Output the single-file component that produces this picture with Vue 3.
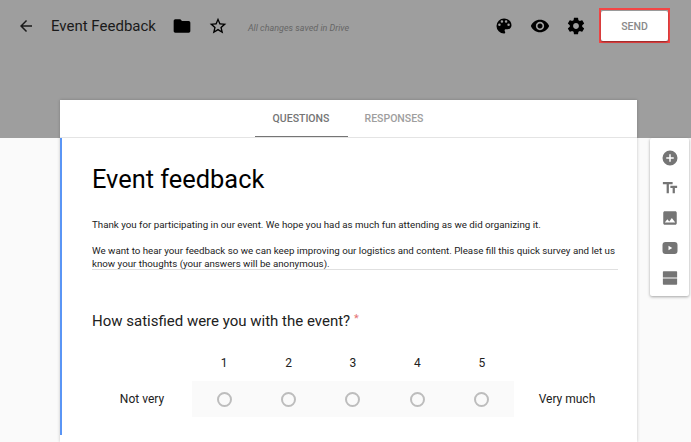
<template>
  <div class="page">
    <header class="topbar">
      <svg class="icon back" viewBox="0 0 24 24"><path d="M20 11H7.83l5.59-5.59L12 4l-8 8 8 8 1.41-1.41L7.83 13H20v-2z" /></svg>
      <span class="doc-title">Event Feedback</span>
      <svg class="icon folder" viewBox="0 0 24 24"><path d="M10 4H4c-1.1 0-2 .9-2 2v12c0 1.1.9 2 2 2h16c1.1 0 2-.9 2-2V8c0-1.1-.9-2-2-2h-8l-2-2z" /></svg>
      <svg class="icon star" viewBox="0 0 24 24"><path d="M22 9.24l-7.19-.62L12 2 9.19 8.63 2 9.24l5.46 4.73L5.82 21 12 17.27 18.18 21l-1.63-7.03L22 9.24zM12 15.4l-3.76 2.27 1-4.28-3.32-2.88 4.38-.38L12 6.1l1.71 4.04 4.38.38-3.32 2.88 1 4.28L12 15.4z" /></svg>
      <span class="saved">All changes saved in Drive</span>
      <div class="actions">
        <svg class="icon" viewBox="0 0 24 24"><path d="M12 3a9 9 0 0 0 0 18c.83 0 1.5-.67 1.5-1.5 0-.39-.15-.74-.39-1.01-.23-.26-.38-.61-.38-.99 0-.83.67-1.5 1.5-1.5H16c2.76 0 5-2.24 5-5 0-4.42-4.03-8-9-8zm-5.5 9a1.5 1.5 0 1 1 0-3 1.5 1.5 0 0 1 0 3zm3-4a1.5 1.5 0 1 1 0-3 1.5 1.5 0 0 1 0 3zm5 0a1.5 1.5 0 1 1 0-3 1.5 1.5 0 0 1 0 3zm3 4a1.5 1.5 0 1 1 0-3 1.5 1.5 0 0 1 0 3z" /></svg>
        <svg class="icon" viewBox="0 0 24 24"><path d="M12 4.5C7 4.5 2.73 7.61 1 12c1.73 4.39 6 7.5 11 7.5s9.27-3.11 11-7.5c-1.73-4.39-6-7.5-11-7.5zM12 17c-2.76 0-5-2.24-5-5s2.24-5 5-5 5 2.24 5 5-2.24 5-5 5zm0-8c-1.66 0-3 1.34-3 3s1.34 3 3 3 3-1.34 3-3-1.34-3-3-3z" /></svg>
        <svg class="icon" viewBox="0 0 24 24"><path d="M19.43 12.98c.04-.32.07-.64.07-.98s-.03-.66-.07-.98l2.11-1.65c.19-.15.24-.42.12-.64l-2-3.46c-.12-.22-.39-.3-.61-.22l-2.49 1c-.52-.4-1.08-.73-1.69-.98l-.38-2.65A.488.488 0 0 0 14 2h-4c-.25 0-.46.18-.49.42l-.38 2.65c-.61.25-1.17.59-1.69.98l-2.49-1c-.23-.09-.49 0-.61.22l-2 3.46c-.13.22-.07.49.12.64l2.11 1.65c-.04.32-.07.65-.07.98s.03.66.07.98l-2.11 1.65c-.19.15-.24.42-.12.64l2 3.46c.12.22.39.3.61.22l2.49-1c.52.4 1.08.73 1.69.98l.38 2.65c.03.24.24.42.49.42h4c.25 0 .46-.18.49-.42l.38-2.65c.61-.25 1.17-.59 1.69-.98l2.49 1c.23.09.49 0 .61-.22l2-3.46c.12-.22.07-.49-.12-.64l-2.11-1.65zM12 15.5c-1.93 0-3.5-1.57-3.5-3.5s1.57-3.5 3.5-3.5 3.5 1.57 3.5 3.5-1.57 3.5-3.5 3.5z" /></svg>
      </div>
      <div class="send-frame">
        <button class="send">SEND</button>
      </div>
    </header>

    <main class="content">
      <section class="card">
        <nav class="tabs">
          <span class="tab active">QUESTIONS</span>
          <span class="tab">RESPONSES</span>
        </nav>
        <div class="form">
          <h1>Event feedback</h1>
          <div class="description">
            <p>Thank you for participating in our event. We hope you had as much fun attending as we did organizing it.</p>
            <p>We want to hear your feedback so we can keep improving our logistics and content. Please fill this quick survey and let us know your thoughts (your answers will be anonymous).</p>
          </div>
          <h2>How satisfied were you with the event? <span class="required">*</span></h2>
          <div class="scale">
            <span></span>
            <span v-for="n in scale" :key="n" class="num">{{ n }}</span>
            <span></span>
            <span class="end-label">Not very</span>
            <div class="radios">
              <span v-for="n in scale" :key="n" class="radio-cell"><i class="radio"></i></span>
            </div>
            <span class="end-label">Very much</span>
          </div>
        </div>
      </section>

      <aside class="toolbox">
        <svg class="tool" viewBox="0 0 24 24"><path d="M12 2a10 10 0 1 0 0 20 10 10 0 0 0 0-20zm5 11h-4v4h-2v-4H7v-2h4V7h2v4h4v2z" /></svg>
        <svg class="tool" viewBox="0 0 24 24"><path d="M2.5 4v3h5v12h3V7h5V4h-13zm19 5h-9v3h3v7h3v-7h3V9z" /></svg>
        <svg class="tool" viewBox="0 0 24 24"><path d="M21 19V5c0-1.1-.9-2-2-2H5c-1.1 0-2 .9-2 2v14c0 1.1.9 2 2 2h14c1.1 0 2-.9 2-2zM8.5 13.5l2.5 3.01L14.5 12l4.5 6H5l3.5-4.5z" /></svg>
        <svg class="tool" viewBox="0 0 24 24"><path d="M6 4h12a4 4 0 0 1 4 4v8a4 4 0 0 1-4 4H6a4 4 0 0 1-4-4V8a4 4 0 0 1 4-4zm4 5v6l5-3-5-3z" fill-rule="evenodd" /></svg>
        <svg class="tool" viewBox="0 0 24 24"><path d="M3.5 3h17a1 1 0 0 1 1 1v7.2h-19V4a1 1 0 0 1 1-1zm-1 9.8h19V20a1 1 0 0 1-1 1h-17a1 1 0 0 1-1-1v-7.2z" /></svg>
      </aside>
    </main>
  </div>
</template>

<script setup>
const scale = [1, 2, 3, 4, 5]
</script>

<style>
html,
body {
  margin: 0;
  background: #fafafa;
}
</style>

<style scoped>
.page {
  width: 691px;
  height: 442px;
  overflow: hidden;
  background: #fafafa;
  font-family: Roboto, "Liberation Sans", sans-serif;
  color: #212121;
}

.topbar {
  height: 138px;
  box-sizing: border-box;
  padding: 8px 21px 0 17px;
  background: #9e9e9e;
  display: flex;
  align-items: flex-start;
}

.icon {
  width: 20px;
  height: 20px;
  margin-top: 8px;
  flex: none;
  fill: #000;
}

.back {
  width: 18px;
  height: 18px;
  margin-top: 9px;
  fill: #1a1a1a;
}

.doc-title {
  margin-left: 16px;
  font-size: 15px;
  line-height: 36px;
  color: #1a1a1a;
  white-space: nowrap;
}

.folder {
  margin-left: 16px;
}

.star {
  margin-left: 16px;
}

.saved {
  margin-left: 20px;
  font-size: 9px;
  font-style: italic;
  line-height: 40px;
  color: #666;
  white-space: nowrap;
}

.actions {
  margin-left: auto;
  display: flex;
  gap: 16px;
}

.send-frame {
  margin-left: 13px;
  width: 71px;
  height: 35px;
  box-sizing: border-box;
  border: 2px solid #f44545;
  padding: 1px 0;
  flex: none;
}

.send {
  display: block;
  width: 100%;
  height: 30px;
  border: 0;
  border-radius: 2px;
  padding: 0;
  background: #fff;
  box-shadow: 0 1px 2px rgba(0, 0, 0, 0.45);
  font: 500 10.5px Roboto, sans-serif;
  color: #8a8a8a;
}

.content {
  display: flex;
  align-items: flex-start;
  margin-top: -38px;
  padding-left: 60px;
}

.card {
  width: 577px;
  height: 342px;
  flex: none;
  background: #fff;
  box-shadow: 0 0 3px rgba(0, 0, 0, 0.22);
}

.tabs {
  height: 38px;
  box-sizing: border-box;
  border-bottom: 1px solid #e4e4e4;
  display: flex;
  justify-content: center;
  padding-right: 2px;
}

.tab {
  width: 93px;
  height: 37px;
  box-sizing: border-box;
  text-align: center;
  font-size: 10.5px;
  font-weight: 500;
  line-height: 37px;
  color: #9e9e9e;
}

.tab.active {
  color: #757575;
  border-bottom: 1px solid #757575;
}

.form {
  height: 297px;
  box-sizing: border-box;
  border-left: 2px solid #5a95f5;
  padding: 0 19px 0 30px;
}

h1 {
  margin: 0;
  padding-top: 25px;
  font-size: 25.4px;
  font-weight: 400;
  line-height: 32px;
  color: #000;
}

.description {
  margin-top: 23px;
  border-bottom: 1px solid #e0e0e0;
  font-size: 9.74px;
  line-height: 13px;
  color: #212121;
  height: 51px;
}

.description p {
  margin: 0 0 13px;
}

h2 {
  margin: 38px 0 0;
  font-size: 15px;
  font-weight: 400;
  line-height: 22px;
  color: #212121;
}

.required {
  color: #e57373;
  font-size: 11px;
  vertical-align: 4px;
}

.scale {
  margin-top: 20px;
  display: grid;
  grid-template-columns: 100px repeat(5, 64.4px) 106px;
  grid-template-rows: 22px 36px;
  row-gap: 7px;
  font-size: 12px;
  align-items: center;
  text-align: center;
}

.num {
  color: #212121;
}

.end-label {
  color: #212121;
}

.radios {
  grid-column: span 5;
  height: 36px;
  display: flex;
  background: #fafafa;
}

.radio-cell {
  flex: 1;
  display: flex;
  align-items: center;
  justify-content: center;
}

.radio {
  width: 15px;
  height: 15px;
  box-sizing: border-box;
  border: 2px solid #bdbdbd;
  border-radius: 50%;
}

.toolbox {
  width: 39px;
  height: 158px;
  margin: 38px 0 0 13px;
  box-sizing: border-box;
  padding: 11px 0 9px;
  display: flex;
  flex-direction: column;
  align-items: center;
  justify-content: space-between;
  background: #fff;
  border-radius: 2px;
  box-shadow: 0 1px 3px rgba(0, 0, 0, 0.35);
}

.tool {
  width: 18px;
  height: 18px;
  fill: #757575;
}
</style>
